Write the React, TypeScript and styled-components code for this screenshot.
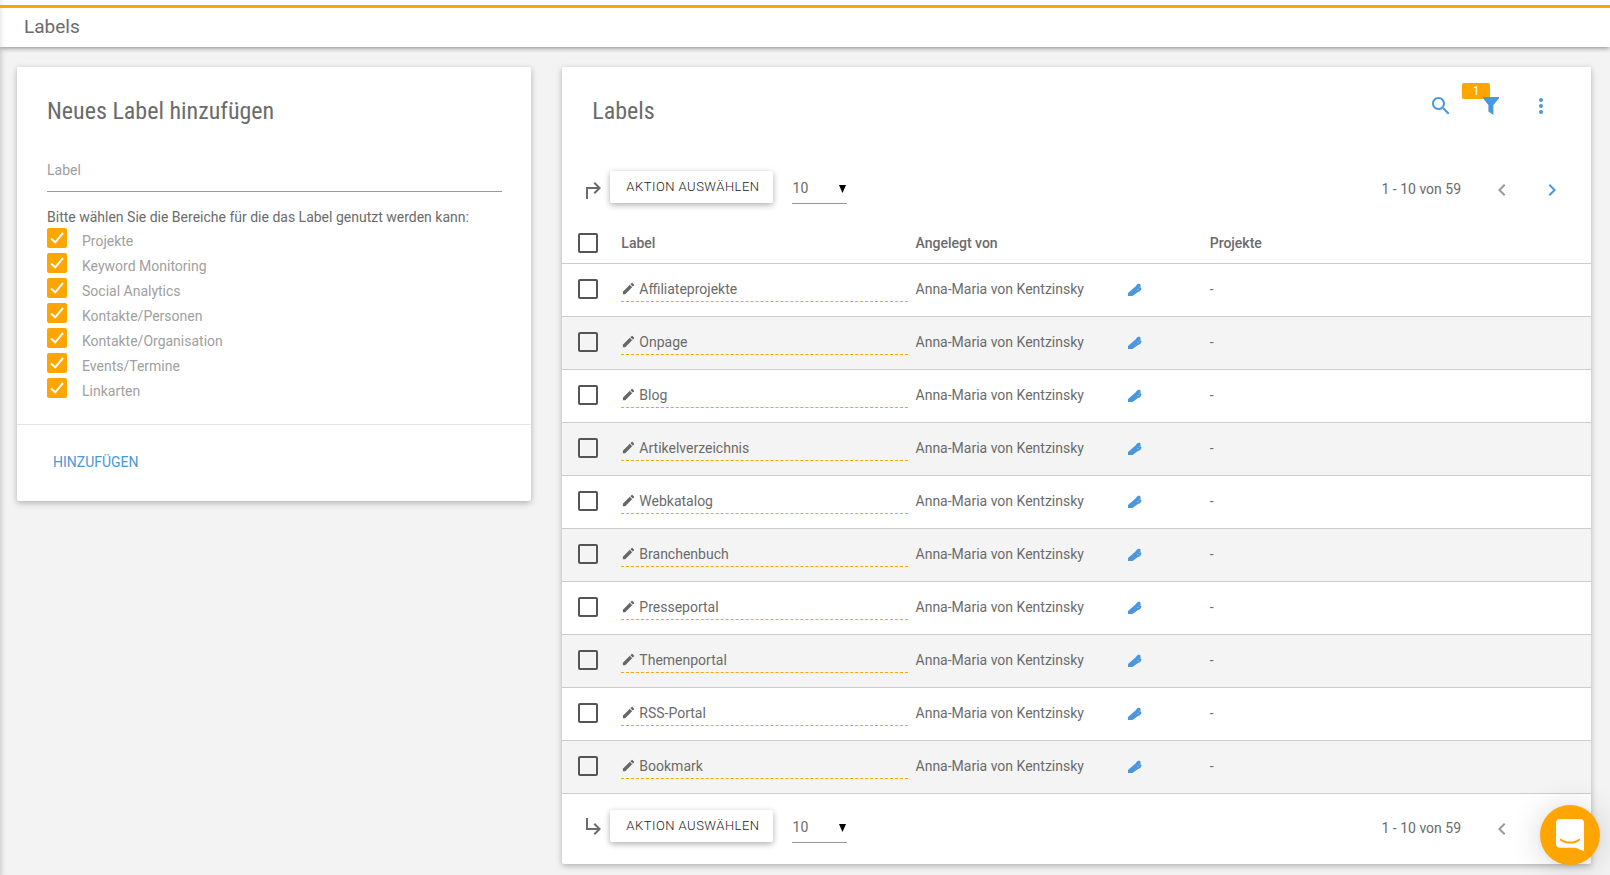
import React from 'react';
import styled, { createGlobalStyle } from 'styled-components';

const Global = createGlobalStyle`
  *, *::before, *::after { box-sizing: border-box; }
  html { height: 100%; }
  body {
    margin: 0;
    min-height: 100%;
    background: #f3f3f3;
    color: #6b6b6b;
    font: 14px/20px Roboto, "Liberation Sans", sans-serif;
  }
  button, input, select { font: inherit; color: inherit; margin: 0; }
`;

const orange = '#ffa500';
const blue = '#4a97db';
const cardShadow = '0 2px 6px rgba(0, 0, 0, 0.28)';

const Page = styled.div`
  min-height: 100vh;
  box-shadow: inset 6px 0 6px -6px rgba(0, 0, 0, 0.25);
`;

const TopBar = styled.header`
  height: 47px;
  padding-top: 5px;
  background: #fff;
  box-shadow: 0 1px 5px rgba(0, 0, 0, 0.45), inset 6px 0 6px -6px rgba(0, 0, 0, 0.15);
`;

const TopTitle = styled.h1`
  margin: 0;
  padding: 6px 24px 0;
  border-top: 3px solid ${orange};
  font-size: 19px;
  line-height: 26px;
  font-weight: 400;
`;

const Columns = styled.main`
  display: grid;
  grid-template-columns: minmax(0, 1fr) minmax(0, 2fr);
  gap: 31px;
  align-items: start;
  padding: 20px 19px 10px 17px;
`;

const Card = styled.section`
  background: #fff;
  border-radius: 2px;
  box-shadow: ${cardShadow};
`;

const CardTitle = styled.h2`
  margin: 0;
  font-family: "Roboto Condensed", Roboto, sans-serif;
  font-size: 24px;
  line-height: 32px;
  font-weight: 400;
`;

const FormBody = styled.div`
  padding: 28px 29px 26px 30px;
  border-bottom: 1px solid #e6e6e6;
`;

const TextInput = styled.input`
  display: block;
  width: 100%;
  height: 42px;
  margin-top: 23px;
  padding: 0 0 2px;
  border: 0;
  border-bottom: 1px solid #9a9a9a;
  background: transparent;
  outline: none;
  &::placeholder { color: #a0a0a0; opacity: 1; }
`;

const AreaSet = styled.fieldset`
  margin: 15px 0 0;
  padding: 0;
  border: 0;
  legend { padding: 0; }
`;

const AreaList = styled.div`
  display: grid;
  gap: 5px;
  padding-top: 1px;
`;

const AreaLabel = styled.label`
  display: flex;
  align-items: flex-start;
  gap: 15px;
  height: 20px;
  color: #a0a0a0;
  line-height: 26px;
`;

const TickBox = styled.span`
  display: grid;
  flex: none;
  width: 20px;
  height: 20px;
  > * { grid-area: 1 / 1; }
  svg { pointer-events: none; }
`;

const TickInput = styled.input`
  appearance: none;
  width: 20px;
  height: 20px;
  border-radius: 2px;
  border: 2px solid #555;
  &:checked { background: ${orange}; border-color: ${orange}; }
  &:not(:checked) + svg { visibility: hidden; }
`;

const FormFooter = styled.div`
  padding: 19px 30px 21px;
`;

const FlatButton = styled.button`
  height: 36px;
  padding: 0 6px;
  border: 0;
  background: transparent;
  color: ${blue};
  cursor: pointer;
`;

const ListHead = styled.div`
  display: flex;
  justify-content: space-between;
  align-items: flex-start;
  height: 88px;
  padding: 14px 25px 0 30px;
  ${CardTitle} { margin-top: 14px; }
`;

const Icons = styled.div`
  display: flex;
`;

const IconButton = styled.button<{ $muted?: boolean }>`
  position: relative;
  display: flex;
  align-items: center;
  justify-content: center;
  width: 50px;
  height: 50px;
  padding: 0;
  border: 0;
  background: transparent;
  color: ${p => (p.$muted ? '#999' : blue)};
  cursor: pointer;
  svg { position: relative; display: block; fill: currentColor; }
`;

const Badge = styled.span`
  position: absolute;
  top: 2px;
  right: 26px;
  width: 28px;
  height: 16px;
  border-radius: 2px;
  background: ${orange};
  color: #fff;
  font-size: 12px;
  line-height: 16px;
  text-align: center;
`;

const Toolbar = styled.div<{ $bottom?: boolean }>`
  display: flex;
  align-items: flex-start;
  height: ${p => (p.$bottom ? 70 : 69)}px;
  padding: 16px 14px 0 20px;
`;

const ArrowBox = styled.span<{ $bottom?: boolean }>`
  display: flex;
  width: 28px;
  padding-top: ${p => (p.$bottom ? 4 : 8)}px;
  svg { display: block; fill: #6b6b6b; }
`;

const RaisedButton = styled.button`
  height: 32px;
  padding: 0 13px 1px 16px;
  border: 0;
  border-radius: 2px;
  background: #fff;
  color: #212121;
  font-size: 13px;
  font-weight: 300;
  letter-spacing: 0.5px;
  text-transform: uppercase;
  white-space: nowrap;
  box-shadow: 0 2px 6px rgba(0, 0, 0, 0.32);
  cursor: pointer;
`;

const SizeBox = styled.span`
  display: grid;
  align-items: center;
  width: 55px;
  height: 33px;
  margin-left: 19px;
  border-bottom: 1px solid #999;
  > * { grid-area: 1 / 1; }
  svg { justify-self: end; margin-right: 1px; margin-top: 4px; pointer-events: none; }
`;

const SizeSelect = styled.select`
  appearance: none;
  width: 100%;
  height: 32px;
  padding: 2px 0 0 1px;
  border: 0;
  background: transparent;
  outline: none;
`;

const Pager = styled.nav`
  display: flex;
  align-items: center;
  height: 38px;
  margin-left: auto;
`;

const PagerText = styled.span`
  padding: 0 16px 2px 0;
`;

const Table = styled.table`
  width: 100%;
  table-layout: fixed;
  border-collapse: separate;
  border-spacing: 0;
`;

const Col = styled.col<{ $w?: string }>`
  width: ${p => p.$w || 'auto'};
`;

const HeadCell = styled.th`
  height: 40px;
  padding: 0 4px 2px;
  border-bottom: 1px solid #ccc;
  text-align: left;
  font-weight: 500;
`;

const Row = styled.tr`
  &:nth-child(even) { background: #f4f4f4; }
`;

const Cell = styled.td`
  height: 53px;
  padding: 0 4px 2px;
  border-bottom: 1px solid #ccc;
`;

const CheckWrap = styled.div`
  padding-left: 12px;
`;

const EditLink = styled.a`
  display: flex;
  align-items: center;
  gap: 3px;
  height: 25px;
  border-bottom: 1px dashed ${orange};
  color: inherit;
  text-decoration: none;
  svg { flex: none; fill: #666; }
`;

const AssignButton = styled.button`
  display: flex;
  margin-left: 17px;
  padding: 2px 0 0;
  border: 0;
  background: transparent;
  color: ${blue};
  cursor: pointer;
`;

const ChatButton = styled.button`
  position: fixed;
  right: 10px;
  bottom: 10px;
  display: flex;
  align-items: center;
  justify-content: center;
  width: 60px;
  height: 60px;
  padding: 0;
  border: 0;
  border-radius: 50%;
  background: ${orange};
  box-shadow: 0 1px 6px rgba(0, 0, 0, 0.06), 0 2px 32px rgba(0, 0, 0, 0.16);
  cursor: pointer;
`;

const areas = [
  'Projekte', 'Keyword Monitoring', 'Social Analytics', 'Kontakte/Personen',
  'Kontakte/Organisation', 'Events/Termine', 'Linkarten',
];

const labels = [
  'Affiliateprojekte', 'Onpage', 'Blog', 'Artikelverzeichnis', 'Webkatalog',
  'Branchenbuch', 'Presseportal', 'Themenportal', 'RSS-Portal', 'Bookmark',
];

function Tick({ label, checked }: { label?: string; checked?: boolean }) {
  return (
    <TickBox>
      <TickInput type="checkbox" defaultChecked={checked} aria-label={label} />
      <svg width="20" height="20" viewBox="0 0 20 20" aria-hidden="true">
        <path d="M4 10.5l4.2 3.8L16 5" fill="none" stroke="#fff" strokeWidth="2" />
      </svg>
    </TickBox>
  );
}

function ListToolbar({ bottom }: { bottom?: boolean }) {
  return (
    <Toolbar $bottom={bottom}>
      <ArrowBox $bottom={bottom}>
        <svg width="24" height="24" viewBox="0 0 24 24" aria-hidden="true">
          <path
            d={bottom
              ? 'M19 15l-6 6-1.42-1.42L15.17 16H4V4h2v10h9.17l-3.59-3.58L13 9l6 6z'
              : 'M19 9l-6-6-1.42 1.42L15.17 8H4v12h2V10h9.17l-3.59 3.58L13 15l6-6z'}
          />
        </svg>
      </ArrowBox>
      <RaisedButton type="button">Aktion auswählen</RaisedButton>
      <SizeBox>
        <SizeSelect aria-label="Einträge pro Seite" defaultValue="10">
          <option>10</option>
          <option>25</option>
          <option>50</option>
        </SizeSelect>
        <svg width="7" height="8" viewBox="0 0 7 8" aria-hidden="true"><path d="M0 0h7L3.500 8z" /></svg>
      </SizeBox>
      <Pager aria-label="Seiten">
        <PagerText>1 - 10 von 59</PagerText>
        <IconButton type="button" $muted aria-label="Zurück">
          <svg width="24" height="24" viewBox="0 0 24 24"><path d="M15.41 7.41L14 6l-6 6 6 6 1.410-1.410L10.830 12z" /></svg>
        </IconButton>
        <IconButton type="button" aria-label="Weiter">
          <svg width="24" height="24" viewBox="0 0 24 24"><path d="M10 6L8.590 7.410 13.170 12l-4.580 4.590L10 18l6-6z" /></svg>
        </IconButton>
      </Pager>
    </Toolbar>
  );
}

export default function App() {
  return (
    <Page>
      <Global />
      <TopBar><TopTitle>Labels</TopTitle></TopBar>
      <Columns>
        <Card as="form">
          <FormBody>
            <CardTitle>Neues Label hinzufügen</CardTitle>
            <TextInput type="text" placeholder="Label" aria-label="Label" />
            <AreaSet>
              <legend>Bitte wählen Sie die Bereiche für die das Label genutzt werden kann:</legend>
              <AreaList>
                {areas.map(area => (
                  <AreaLabel key={area}><Tick checked />{area}</AreaLabel>
                ))}
              </AreaList>
            </AreaSet>
          </FormBody>
          <FormFooter><FlatButton type="button">HINZUFÜGEN</FlatButton></FormFooter>
        </Card>
        <Card>
          <ListHead>
            <CardTitle>Labels</CardTitle>
            <Icons>
              <IconButton type="button" aria-label="Suchen">
                <svg width="24" height="24" viewBox="0 0 24 24">
                  <path d="M15.500 14h-.79l-.28-.27C15.410 12.590 16 11.110 16 9.500 16 5.910 13.090 3 9.500 3S3 5.910 3 9.500 5.910 16 9.500 16c1.610 0 3.090-.59 4.230-1.570l.27.28v.79l5 4.990L20.490 19l-4.990-5zm-6 0C7.010 14 5 11.990 5 9.500S7.010 5 9.500 5 14 7.010 14 9.500 11.990 14 9.500 14z" />
                </svg>
              </IconButton>
              <IconButton type="button" aria-label="Filter">
                <Badge>1</Badge>
                <svg width="16" height="18" viewBox="0 0 16 18">
                  <path d="M0 0h16v1.200L10.400 8v10L5.400 14.500V8L0 1.200z" />
                </svg>
              </IconButton>
              <IconButton type="button" aria-label="Mehr">
                <svg width="24" height="24" viewBox="0 0 24 24">
                  <circle cx="12" cy="6" r="2" /><circle cx="12" cy="12" r="2" /><circle cx="12" cy="18" r="2" />
                </svg>
              </IconButton>
            </Icons>
          </ListHead>
          <ListToolbar />
          <Table>
            <colgroup>
              <Col $w="55px" /><Col $w="28.6%" /><Col $w="19%" /><Col $w="9.6%" /><Col />
            </colgroup>
            <thead>
              <tr>
                <HeadCell><CheckWrap><Tick label="Alle auswählen" /></CheckWrap></HeadCell>
                <HeadCell>Label</HeadCell>
                <HeadCell colSpan={2}>Angelegt von</HeadCell>
                <HeadCell>Projekte</HeadCell>
              </tr>
            </thead>
            <tbody>
              {labels.map(name => (
                <Row key={name}>
                  <Cell><CheckWrap><Tick label={name} /></CheckWrap></Cell>
                  <Cell>
                    <EditLink href="#">
                      <svg width="15" height="15" viewBox="0 0 24 24" aria-hidden="true">
                        <path d="M3 17.250V21h3.750L17.810 9.940l-3.750-3.750L3 17.250zM20.710 7.040a1 1 0 0 0 0-1.410l-2.340-2.340a1 1 0 0 0-1.410 0l-1.830 1.830 3.750 3.750 1.830-1.830z" />
                      </svg>
                      {name}
                    </EditLink>
                  </Cell>
                  <Cell>Anna-Maria von Kentzinsky</Cell>
                  <Cell>
                    <AssignButton type="button" aria-label="Bearbeiten">
                      <svg width="14" height="14" viewBox="0 0 14 14">
                        <path d="M0 10L7.500 3.500 9 1.500l2-1 1.500 1V4l1 1-.5 2-1.500 1.500-1.500.5L4.500 13H0z" fill="currentColor" />
                        <path d="M9.500 6l1 1M11.500 4l.8.8" stroke="#fff" strokeWidth="1" strokeOpacity="0.6" />
                      </svg>
                    </AssignButton>
                  </Cell>
                  <Cell>-</Cell>
                </Row>
              ))}
            </tbody>
          </Table>
          <ListToolbar bottom />
        </Card>
      </Columns>
      <ChatButton type="button" aria-label="Chat">
        <svg width="28" height="32" viewBox="0 0 28 32">
          <path d="M28 32s-4.714-1.855-8.527-3.340H3.437C1.540 28.660 0 27.026 0 25.013V3.644C0 1.633 1.540 0 3.437 0h21.125c1.898 0 3.437 1.632 3.437 3.645v18.404H28V32zm-4.139-11.982a.88.88 0 0 0-1.292-.105c-.03.026-3.015 2.681-8.570 2.681-5.486 0-8.517-2.636-8.571-2.684a.88.88 0 0 0-1.290.107 1.010 1.010 0 0 0-.219.708.992.992 0 0 0 .318.664c.142.128 3.537 3.150 9.762 3.150 6.226 0 9.621-3.022 9.763-3.150a.992.992 0 0 0 .317-.664 1.010 1.010 0 0 0-.218-.707z" fill="#fff" />
        </svg>
      </ChatButton>
    </Page>
  );
}
